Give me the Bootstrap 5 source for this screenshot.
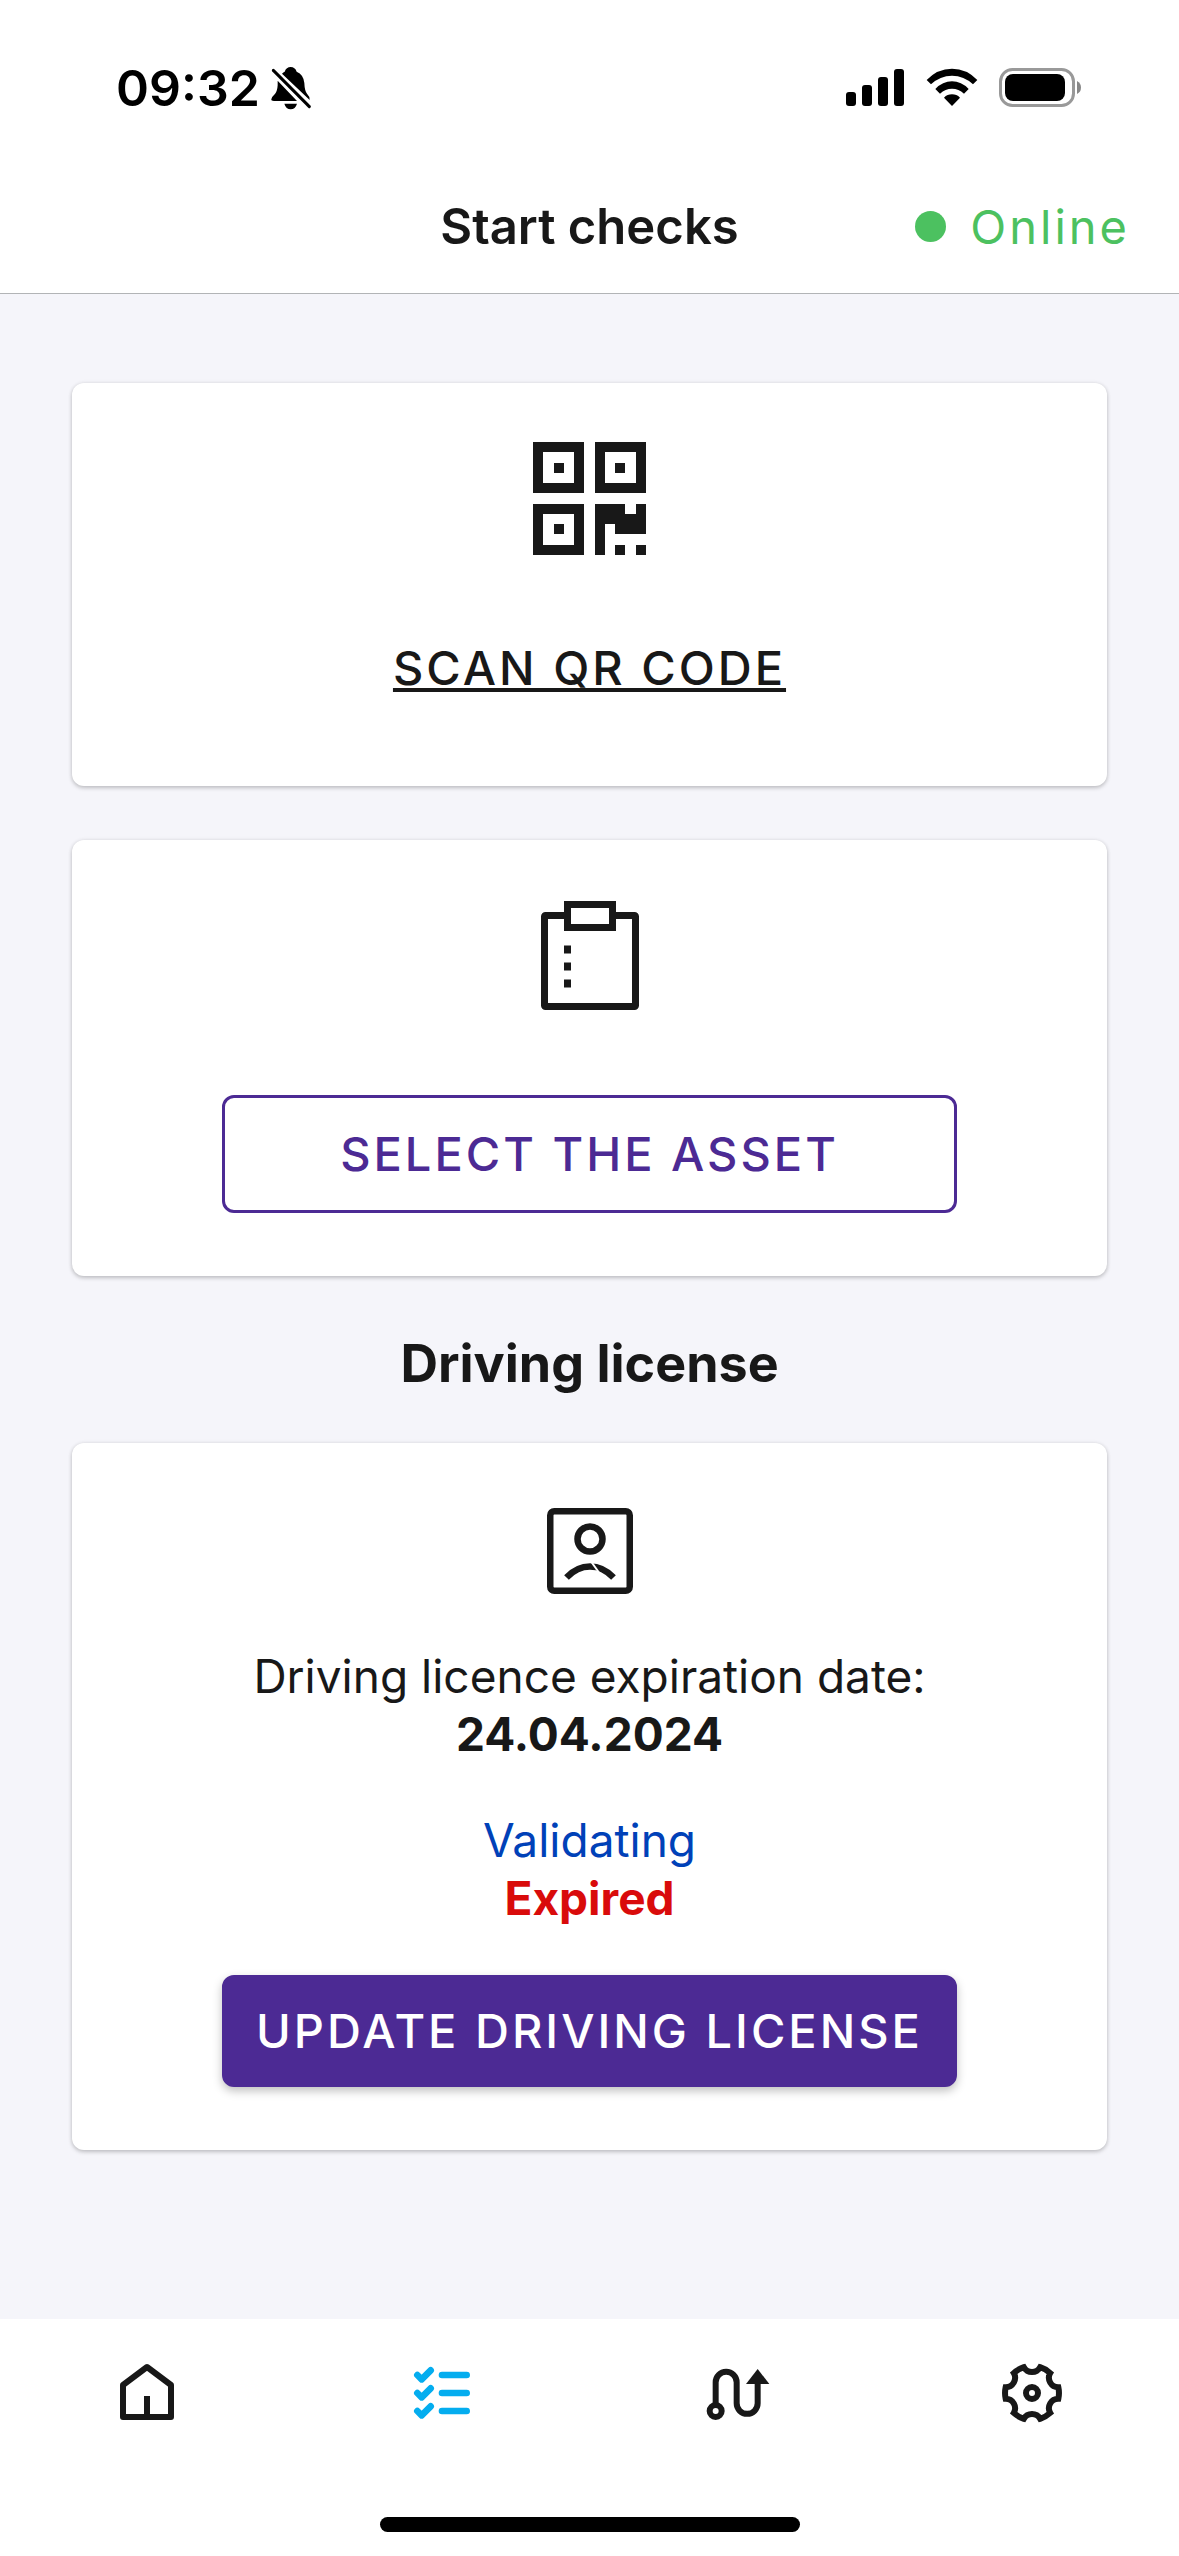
<!DOCTYPE html>
<html lang="en">
<head>
<meta charset="utf-8">
<meta name="viewport" content="width=device-width, initial-scale=1">
<title>Start checks</title>
<link href="https://cdn.jsdelivr.net/npm/bootstrap@5.3.0/dist/css/bootstrap.min.css" rel="stylesheet">
<style>
:root { --ink: #181818; --violet: #4c2a94; --surface: #f5f5fa; }
body { font-family: Inter, "Liberation Sans", sans-serif; font-size: 46px; line-height: 58px; color: var(--ink); background: var(--surface); }
svg { display: block; flex: none; }
.status-bar { padding: 56px 97px 0 116px; height: 160px; color: #000; }
.status-time { font-size: 50px; font-weight: 600; line-height: 64px; }
.status-icons { gap: 21px; padding-top: 12px; }
.app-bar { display: grid; grid-template-columns: 1fr auto 1fr; align-items: center; height: 134px; padding: 0 49px; border-bottom: 1px solid #b2b4b6; }
.app-title { font-size: 49px; font-weight: 600; line-height: 64px; }
.online { color: #4cc160; font-size: 47px; letter-spacing: 3px; gap: 24px; }
.online-dot { width: 31px; height: 31px; border-radius: 50%; background: currentColor; }
.content-area { padding: 89px 72px 0; }
.panel { border: 0; border-radius: 12px; box-shadow: 0 2px 4px rgba(0, 0, 0, .2), 0 0 4px rgba(0, 0, 0, .08); padding: 59px 150px 63px; align-items: center; text-align: center; }
.panel-scan { padding-bottom: 89px; margin-bottom: 54px; }
.panel-license { padding-top: 65px; }
.caps { font-size: 47px; font-weight: 500; line-height: 58px; letter-spacing: 3px; text-transform: uppercase; }
.scan-link { color: var(--ink); margin-top: 84px; text-decoration-thickness: 4px; text-underline-offset: 3px; }
.wide-btn { width: 100%; border-radius: 12px; padding: 24px 12px; border: 3px solid var(--violet); white-space: nowrap; }
.outline-violet { color: var(--violet); background: #fff; padding: 27px 12px; margin-top: 84px; }
.solid-violet { color: #fff; background: var(--violet); box-shadow: 0 4px 10px rgba(0, 0, 0, .25); }
.section-title { font-size: 52px; font-weight: 700; line-height: 64px; margin: 56px 0 47px; text-align: center; }
.license-label { margin-top: 53px; }
.state-validating { color: #0041b8; }
.state-expired { color: #d90b0b; }
.tab-bar { background: #fff; height: 237px; padding-top: 43px; }
.home-indicator { width: 420px; height: 15px; border-radius: 8px; background: #000; margin: auto auto 24px; }
</style>
</head>
<body>
<div class="d-flex flex-column min-vh-100">
  <header class="bg-white">
    <div class="status-bar d-flex justify-content-between align-items-start">
      <div class="d-flex align-items-start gap-2">
        <span class="status-time">09:32</span>
        <svg class="mt-2" width="46" height="46" viewBox="622 72 138 138" role="img" aria-label="Silent">
          <path d="M632 178q2-8 10-15 8-9 9-27v-14l58 61h-69q-9 0-8-5zM664 101q4-4 8-6 5-14 18-14t18 14q21 9 23 34 1 24 8 32 8 7 8 19zM671 191h38q-5 17-19 17t-19-17z" fill="#000"/>
          <path d="M638 91l108 109" stroke="#000" stroke-width="9" stroke-linecap="round"/>
        </svg>
      </div>
      <div class="status-icons d-flex">
        <svg width="59" height="39" viewBox="0 0 59 39" aria-hidden="true"><rect y="24" width="10" height="14" rx="3"/><rect x="16" y="17" width="10" height="21" rx="3"/><rect x="32" y="9" width="10" height="29" rx="3"/><rect x="48" y="1" width="10" height="37" rx="3"/></svg>
        <svg width="52" height="39" viewBox="317 84 156 117" aria-hidden="true"><path d="M319 120q32-34 76-34t76 34l-13 13q-27-26-63-26t-63 26zM345 147q22-23 50-23t50 23l-14 14q-16-15-36-15t-36 15zM371 173q10-10 24-10t24 10l-24 25z"/></svg>
        <svg width="83" height="39" viewBox="0 0 83 39" aria-hidden="true"><rect x="1.5" y="1.5" width="73" height="36" rx="12" fill="none" stroke="#999" stroke-width="3"/><rect x="6" y="6" width="60" height="27" rx="8"/><path d="M78 13q4 2 4 6.500t-4 6.500z" fill="#888"/></svg>
      </div>
    </div>
    <div class="app-bar">
      <span></span>
      <h1 class="app-title m-0">Start checks</h1>
      <div class="online d-flex align-items-center justify-content-end"><span class="online-dot"></span><span>Online</span></div>
    </div>
  </header>

  <main class="content-area flex-grow-1">
    <section class="card panel panel-scan">
      <svg width="113" height="113" viewBox="0 0 11 11" shape-rendering="crispEdges" fill="#181818" fill-rule="evenodd" aria-hidden="true">
        <path d="M0 0h5v5H0zM1 1v3h3V1zM2 2h1v1H2zM6 0h5v5H6zM7 1v3h3V1zM8 2h1v1H8zM0 6h5v5H0zM1 7v3h3V7zM2 8h1v1H2zM6 6h3v1h1V6h1v3H8V8H7v3H6zM8 10h1v1H8zM10 10h1v1h-1z"/>
      </svg>
      <a href="#scan" class="scan-link caps">Scan QR code</a>
    </section>

    <section class="card panel">
      <svg width="98" height="112" viewBox="0 0 98 112" fill="none" stroke="#181818" stroke-width="7" aria-hidden="true">
        <path d="M23 16.500H4.500a1 1 0 0 0-1 1V106.500a1 1 0 0 0 1 1H93.500a1 1 0 0 0 1-1V17.500a1 1 0 0 0-1-1H75M26.500 5.500h45v23h-45z"/>
        <path d="M23 50.500h7M23 67.500h7M23 84.500h7" stroke-width="8"/>
      </svg>
      <button type="button" class="btn wide-btn outline-violet caps">Select the asset</button>
    </section>

    <h2 class="section-title">Driving license</h2>

    <section class="card panel panel-license">
      <svg width="86" height="86" viewBox="0 0 86 86" fill="none" stroke="#181818" stroke-width="6.500" aria-hidden="true">
        <rect x="3.250" y="3.250" width="79.500" height="79.500" rx="4"/>
        <circle cx="43" cy="31" r="12.500"/>
        <path d="M19.500 69.500Q30 58.500 43 58.500T66.500 69.500"/>
        <path d="M43 52l10 14" stroke="#fff" stroke-width="2"/>
      </svg>
      <div class="license-label">Driving licence expiration date:</div>
      <div class="fw-bold">24.04.2024</div>
      <div class="state-validating mt-5">Validating</div>
      <div class="state-expired fw-bold">Expired</div>
      <button type="button" class="btn wide-btn solid-violet caps mt-5">Update driving license</button>
    </section>
  </main>

  <footer class="tab-bar d-flex flex-column">
    <nav class="row g-0 text-center" aria-label="Main">
      <a href="#home" class="col d-flex justify-content-center" aria-label="Home">
        <svg width="62" height="62" viewBox="78 186 186 186" fill="none" stroke="#181818" stroke-width="18" stroke-linejoin="round"><path d="M99 255L171 201L243 255V351H99zM171 351V288"/></svg>
      </a>
      <a href="#checks" class="col d-flex justify-content-center" aria-label="Checks" aria-current="page">
        <svg width="62" height="62" viewBox="963 186 186 186" fill="none" stroke="#04adef" stroke-width="20" stroke-linecap="round" stroke-linejoin="round"><path d="M982 225l13 13 27-27M1056 225h74M982 279l13 13 27-27M1056 279h74M982 333l13 13 27-27M1056 333h74"/></svg>
      </a>
      <a href="#routes" class="col d-flex justify-content-center" aria-label="Routes">
        <svg width="66" height="62" viewBox="103 186 198 186" fill="none" stroke="#181818" stroke-width="18"><circle cx="138" cy="333" r="18"/><path d="M138 315V247a31.500 31.500 0 0 1 63 0V310a31.500 31.500 0 0 0 63 0V245"/><path d="M264 207l35 45h-70z" fill="#181818" stroke="none"/></svg>
      </a>
      <a href="#settings" class="col d-flex justify-content-center" aria-label="Settings">
        <svg width="62" height="62" viewBox="-93 -93 186 186" fill="none" stroke="#181818" stroke-width="18"><circle r="18"/><path d="M24.400-77.300A81 81 0 0 1 54.700-59.700A28 28 0 0 0 79-17.500A81 81 0 0 1 79 17.500A28 28 0 0 0 54.700 59.700A81 81 0 0 1 24.400 77.300A28 28 0 0 0-24.400 77.300A81 81 0 0 1-54.700 59.700A28 28 0 0 0-79 17.500A81 81 0 0 1-79-17.500A28 28 0 0 0-54.700-59.700A81 81 0 0 1-24.400-77.300A28 28 0 0 0 24.400-77.300z"/></svg>
      </a>
    </nav>
    <div class="home-indicator"></div>
  </footer>
</div>
<script src="https://cdn.jsdelivr.net/npm/bootstrap@5.3.0/dist/js/bootstrap.bundle.min.js"></script>
</body>
</html>
